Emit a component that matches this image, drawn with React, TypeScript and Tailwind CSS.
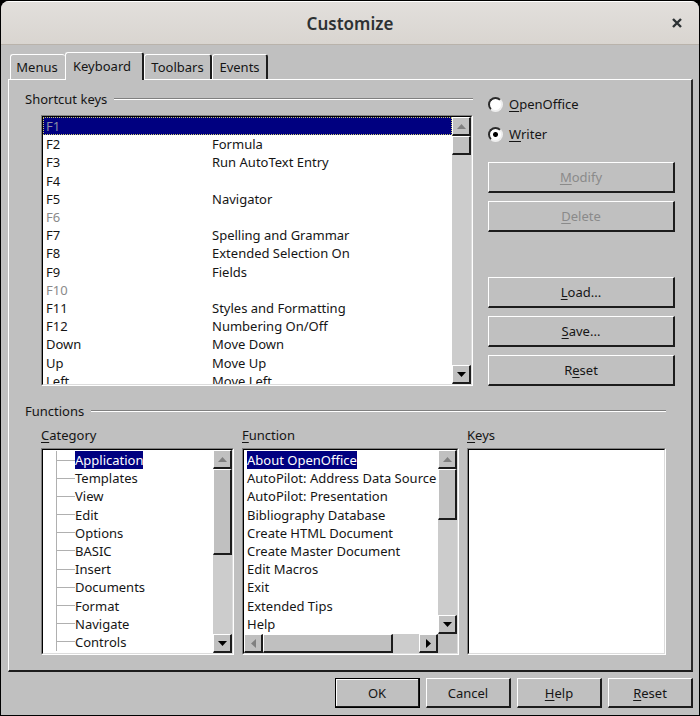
import React, { useState } from "react";

const shortcuts: { key: string; command: string; fixed?: boolean }[] = [
  { key: "F1", command: "", fixed: true },
  { key: "F2", command: "Formula" },
  { key: "F3", command: "Run AutoText Entry" },
  { key: "F4", command: "" },
  { key: "F5", command: "Navigator" },
  { key: "F6", command: "", fixed: true },
  { key: "F7", command: "Spelling and Grammar" },
  { key: "F8", command: "Extended Selection On" },
  { key: "F9", command: "Fields" },
  { key: "F10", command: "", fixed: true },
  { key: "F11", command: "Styles and Formatting" },
  { key: "F12", command: "Numbering On/Off" },
  { key: "Down", command: "Move Down" },
  { key: "Up", command: "Move Up" },
  { key: "Left", command: "Move Left" },
];

const categories = [
  "Application",
  "Templates",
  "View",
  "Edit",
  "Options",
  "BASIC",
  "Insert",
  "Documents",
  "Format",
  "Navigate",
  "Controls",
];

const functions = [
  "About OpenOffice",
  "AutoPilot: Address Data Source",
  "AutoPilot: Presentation",
  "Bibliography Database",
  "Create HTML Document",
  "Create Master Document",
  "Edit Macros",
  "Exit",
  "Extended Tips",
  "Help",
];

const raised =
  "border-t border-l border-r-2 border-b-2 border-t-white border-l-white border-r-[#1c1c1c] border-b-[#1c1c1c] bg-[#c0c0c0]";

/* Sunken frame: dark on the top and left, light on the bottom and right. */
function Sunken({ className = "", children }: { className?: string; children?: React.ReactNode }) {
  return (
    <div className={`border border-t-[#808080] border-l-[#808080] border-r-white border-b-white ${className}`}>
      <div className="flex h-full border border-t-black border-l-black border-r-[#dcdcdc] border-b-[#dcdcdc] bg-white">
        {children}
      </div>
    </div>
  );
}

/* Text with one underlined access key. */
function Mnemonic({ text, at = 0 }: { text: string; at?: number }) {
  return (
    <span>
      {text.slice(0, at)}
      <span className="underline decoration-1 underline-offset-2">{text[at]}</span>
      {text.slice(at + 1)}
    </span>
  );
}

function PushButton({
  className = "",
  disabled = false,
  children,
}: {
  className?: string;
  disabled?: boolean;
  children: React.ReactNode;
}) {
  return (
    <button
      type="button"
      disabled={disabled}
      className={`flex items-center justify-center pt-[2px] ${raised} disabled:text-[#8a8a8a] ${className}`}
    >
      {children}
    </button>
  );
}

const arrows = {
  up: "M0 5 L4.5 0 L9 5 Z",
  down: "M0 0 L9 0 L4.5 5 Z",
  left: "M5 0 L0 4.5 L5 9 Z",
  right: "M0 0 L5 4.5 L0 9 Z",
};

function ArrowButton({ dir, dim = false }: { dir: keyof typeof arrows; dim?: boolean }) {
  const vertical = dir === "up" || dir === "down";
  return (
    <button
      type="button"
      aria-label={`Scroll ${dir}`}
      disabled={dim}
      className={`flex h-[19px] w-[19px] shrink-0 items-center justify-center ${raised}`}
    >
      <svg width={vertical ? 9 : 5} height={vertical ? 5 : 9} fill={dim ? "#808080" : "#000"}>
        <path d={arrows[dir]} />
      </svg>
    </button>
  );
}

function VerticalBar({ thumb }: { thumb: string }) {
  return (
    <div className="flex w-[19px] shrink-0 flex-col bg-[#cccccc]">
      <ArrowButton dir="up" dim />
      <div className={`${thumb} ${raised}`} />
      <div className="flex-1" />
      <ArrowButton dir="down" />
    </div>
  );
}

function GroupTitle({ children }: { children: React.ReactNode }) {
  return (
    <div className="flex items-center gap-[7px] leading-5">
      <h2>{children}</h2>
      <div className="h-[2px] flex-1 border-t border-b border-t-[#808080] border-b-white" />
    </div>
  );
}

function Radio({ label, checked, onChange }: { label: string; checked: boolean; onChange: () => void }) {
  return (
    <label className="flex items-center gap-[6px] leading-5">
      <input
        type="radio"
        name="scope"
        checked={checked}
        onChange={onChange}
        className="h-[15px] w-[15px] appearance-none rounded-full border-2 border-t-[#2a2a2a] border-r-[#eeeeee] border-b-[#eeeeee] border-l-[#2a2a2a] bg-white checked:bg-[radial-gradient(circle,#000_0,#000_2px,#fff_3px)]"
      />
      <Mnemonic text={label} />
    </label>
  );
}

const tabs = [
  { name: "Menus", size: "h-[25px] w-[55px] pt-[2px] pr-[2px] border-r-0" },
  { name: "Keyboard", size: "h-[28px] w-[79px] -mb-px pr-[4px] border-r-2" },
  { name: "Toolbars", size: "h-[25px] w-[68px] pt-[2px] border-r-2" },
  { name: "Events", size: "h-[25px] w-[56px] pt-[2px] border-r-2" },
];

export default function App() {
  const [scope, setScope] = useState("Writer");
  return (
    <div className="bg-black p-px font-['Noto_Sans',sans-serif] text-[13px] text-[#151515]">
      <div className="overflow-hidden rounded-t-lg bg-[#c0c0c0]">
        <header className="flex h-11 items-center border-t border-b border-t-white border-b-[#b9b3ab] bg-linear-to-b from-[#e2dfdc] to-[#d9d5d0] px-[14px]">
          <div className="w-4" />
          <h1 className="flex-1 pt-[2px] text-center text-[17px] font-semibold text-[#2c3133]">Customize</h1>
          <button type="button" aria-label="Close" className="flex w-4 justify-center">
            <svg width="10" height="10" stroke="#2c3133" strokeWidth="2.4" fill="none">
              <path d="M1 1 L9 9 M9 1 L1 9" />
            </svg>
          </button>
        </header>

        <div className="py-[7px] pr-[6px] pl-[7px]">
          <div role="tablist" className="flex items-end pl-[2px]">
            {tabs.map((tab) => (
              <button
                key={tab.name}
                type="button"
                role="tab"
                aria-selected={tab.name === "Keyboard"}
                className={`relative flex items-center justify-center rounded-t-[3px] border-t border-l border-t-white border-l-white border-r-[#1c1c1c] bg-[#c0c0c0] ${tab.size}`}
              >
                {tab.name}
              </button>
            ))}
          </div>

          <main className="border-t border-r-2 border-b-2 border-l border-t-white border-r-[#2a2a2a] border-b-[#1c1c1c] border-l-white pt-[9px] pr-[16px] pb-[15px] pl-[16px]">
            <section className="flex gap-[15px]">
              <div className="flex-1">
                <GroupTitle>Shortcut keys</GroupTitle>
                <Sunken className="mt-[6px] ml-[16px] h-[271px]">
                  <div className="flex-1 overflow-hidden">
                    <table className="h-[273px] w-full table-fixed border-collapse leading-[18px]">
                      <tbody>
                        {shortcuts.map((s, i) => (
                          <tr
                            key={s.key}
                            className={
                              i === 0
                                ? "bg-[#000080] text-[#8c8ca4] outline-1 -outline-offset-1 outline-dotted outline-[#c8c870]"
                                : s.fixed
                                  ? "text-[#8a8a8a]"
                                  : ""
                            }
                          >
                            <td className="w-[166px] p-0 pl-[3px]">{s.key}</td>
                            <td className="p-0 pl-[3px]">{s.command}</td>
                          </tr>
                        ))}
                      </tbody>
                    </table>
                  </div>
                  <VerticalBar thumb="h-[19px]" />
                </Sunken>
              </div>

              <div className="flex w-[187px] flex-col pt-[5px]">
                <Radio label="OpenOffice" checked={scope === "OpenOffice"} onChange={() => setScope("OpenOffice")} />
                <div className="h-[10px]" />
                <Radio label="Writer" checked={scope === "Writer"} onChange={() => setScope("Writer")} />
                <div className="mt-[18px] flex flex-1 flex-col gap-2">
                  <PushButton disabled className="h-[31px]">
                    <Mnemonic text="Modify" />
                  </PushButton>
                  <PushButton disabled className="h-[31px]">
                    <Mnemonic text="Delete" />
                  </PushButton>
                  <PushButton className="mt-auto h-[31px]">
                    <Mnemonic text="Load..." />
                  </PushButton>
                  <PushButton className="h-[31px]">
                    <Mnemonic text="Save..." />
                  </PushButton>
                  <PushButton className="h-[31px]">
                    <Mnemonic text="Reset" at={1} />
                  </PushButton>
                </div>
              </div>
            </section>

            <section className="mt-[15px] pr-[9px]">
              <GroupTitle>Functions</GroupTitle>
              <div className="mt-[4px] ml-[16px] grid grid-cols-[193fr_217fr_199fr] gap-x-2">
                <div className="min-w-0">
                  <h3 className="leading-5">
                    <Mnemonic text="Category" />
                  </h3>
                  <Sunken className="mt-[3px] h-[207px]">
                    <div className="flex-1 pt-px pl-[13px]">
                      <ul
                        role="listbox"
                        aria-label="Category"
                        className="grid h-[200px] auto-rows-fr border-l border-[#b0b0b0] leading-[18px]"
                      >
                        {categories.map((c, i) => (
                          <li key={c} role="option" aria-selected={i === 0} className="flex items-center">
                            <span className="h-px w-[18px] bg-[#b0b0b0]" />
                            <span className={i === 0 ? "bg-[#000080] text-white" : ""}>{c}</span>
                          </li>
                        ))}
                      </ul>
                    </div>
                    <VerticalBar thumb="h-[86px]" />
                  </Sunken>
                </div>

                <div className="min-w-0">
                  <h3 className="leading-5">
                    <Mnemonic text="Function" />
                  </h3>
                  <Sunken className="mt-[3px] h-[207px]">
                    <div className="flex min-w-0 flex-1 flex-col">
                      <div className="flex min-h-0 flex-1">
                        <div className="min-w-0 flex-1 overflow-hidden pt-px pl-[3px]">
                          <ul
                            role="listbox"
                            aria-label="Function"
                            className="grid h-[182px] auto-rows-fr leading-[18px] whitespace-nowrap"
                          >
                            {functions.map((f, i) => (
                              <li key={f} role="option" aria-selected={i === 0} className="flex items-center">
                                <span className={i === 0 ? "bg-[#000080] text-white" : ""}>{f}</span>
                              </li>
                            ))}
                          </ul>
                        </div>
                        <VerticalBar thumb="h-[51px]" />
                      </div>
                      <div className="flex bg-[#c0c0c0] pr-[19px]">
                        <ArrowButton dir="left" dim />
                        <div className={`w-[130px] ${raised}`} />
                        <div className="flex-1 bg-[#cccccc]" />
                        <ArrowButton dir="right" />
                      </div>
                    </div>
                  </Sunken>
                </div>

                <div className="min-w-0">
                  <h3 className="leading-5">
                    <Mnemonic text="Keys" />
                  </h3>
                  <Sunken className="mt-[3px] h-[207px]" />
                </div>
              </div>
            </section>
          </main>

          <footer className="mt-[6px] flex justify-end gap-[6px]">
            <PushButton className="h-[30px] w-[85px] shadow-[inset_1px_1px_0_#fff] outline-1 -outline-offset-1 outline-black">
              OK
            </PushButton>
            <PushButton className="h-[30px] w-[85px]">Cancel</PushButton>
            <PushButton className="h-[30px] w-[85px]">
              <Mnemonic text="Help" />
            </PushButton>
            <PushButton className="h-[30px] w-[85px]">
              <Mnemonic text="Reset" />
            </PushButton>
          </footer>
        </div>
      </div>
    </div>
  );
}
